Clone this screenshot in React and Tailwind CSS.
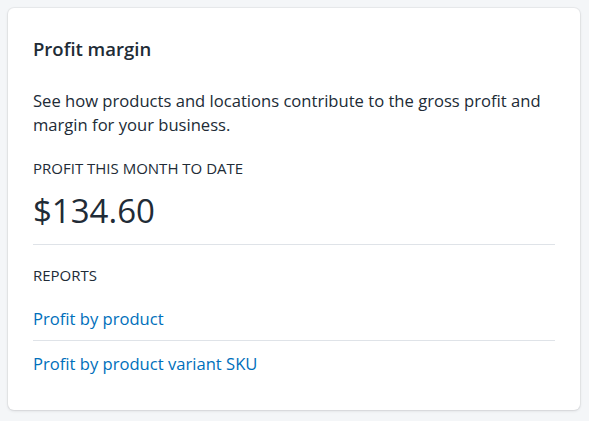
export default function App() {
  return (
    <div
      className="min-h-screen bg-[#f4f6f8] p-2 text-[#212b36]"
      style={{ fontFamily: '"Open Sans", "Noto Sans", sans-serif' }}
    >
      <div className="flex h-[402px] w-[572px] flex-col rounded-md bg-white px-[25px] pt-[29px] shadow-[0_0_0_1px_rgba(63,63,68,0.05),0_1px_3px_0_rgba(63,63,68,0.15)]">
        <h2 className="text-[18.5px] font-semibold leading-[24px]">Profit margin</h2>
        <p className="mt-[28px] text-[16.6px] leading-[24px]">
          See how products and locations contribute to the gross profit and margin for your business.
        </p>
        <div className="mt-[21px] text-[15px] uppercase leading-[20px]">Profit this month to date</div>
        <div className="mt-[13px] text-[33px] leading-[40px]">$134.60</div>
        <div className="mt-[13px] border-t border-[#dfe3e8]" />
        <div className="mt-[20px] text-[15px] uppercase leading-[20px]">Reports</div>
        <a href="#" className="mt-[22px] block pb-[9px] text-[16.6px] leading-[24px] text-[#006fbb]">
          Profit by product
        </a>
        <div className="border-t border-[#dfe3e8]" />
        <a href="#" className="mt-[11px] block text-[16.6px] leading-[24px] text-[#006fbb]">
          Profit by product variant SKU
        </a>
      </div>
    </div>
  );
}
